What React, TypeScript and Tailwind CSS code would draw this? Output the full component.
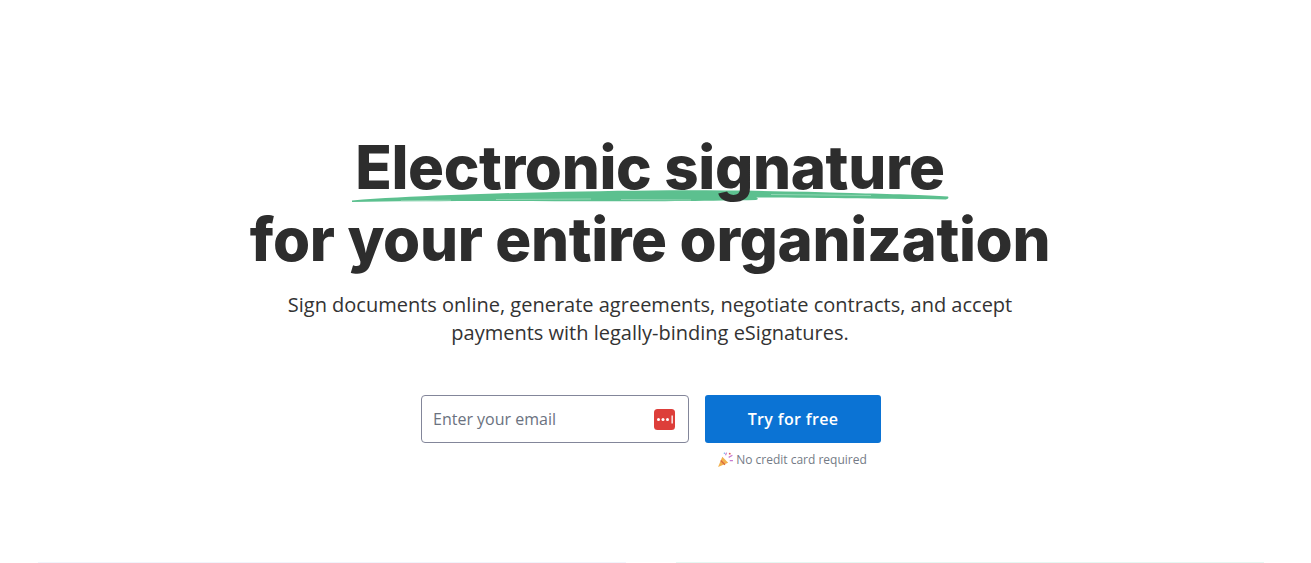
export default function App() {
  return (
    <div className="h-[563px] w-[1311px] overflow-hidden bg-white font-['Open_Sans',sans-serif]">
      <div className="flex w-[1300px] flex-col items-center pt-[131px]">
        <h1 className="relative text-center font-['Inter',sans-serif] text-[60px] font-extrabold leading-[72px] tracking-[-0.35px] text-[#2d2d2d]">
          <span className="relative inline-block">
            <svg className="absolute left-[-4px] top-[55px] h-[18px] w-[600px]" viewBox="0 0 600 18" fill="none">
              <path d="M1 14.500C30 12 60 10.500 100 9C170 6.500 240 5 300 4.500C370 4 440 5 500 7C540 8 575 9 597 10.500C598 12 597 13 595 13.500C540 13 470 12 405 11.500C408 12.500 407 13.500 405 14C340 15.500 240 15.500 150 15C90 15 40 15.300 1 16Z" fill="#5cc08f" />
              <path d="M50 14.800L100 14.200M145 13.500L240 13M270 13.500L340 14M420 8.500L520 9.500" stroke="#a9dfc4" strokeWidth="0.7" />
            </svg>
            <span className="relative">Electronic signature</span>
          </span>
          <br />
          for your entire organization
        </h1>
        <p className="mt-[16px] w-[760px] text-center text-[20px] leading-[28px] text-[#333333]">
          Sign documents online, generate agreements, negotiate contracts, and accept
          <br />
          payments with legally-binding eSignatures.
        </p>
        <div className="mt-[48px] ml-[2px] flex items-start gap-[16px]">
          <div className="flex h-[48px] w-[268px] items-center justify-between rounded-[4px] border border-[#83869a] bg-white pl-[11px] pr-[13px]">
            <span className="text-[16px] text-[#6b7280]">Enter your email</span>
            <svg width="21" height="21" viewBox="0 0 21 21">
              <rect width="21" height="21" rx="3.500" fill="#dd3e3a" />
              <circle cx="4.500" cy="10.500" r="1.500" fill="#fff" />
              <circle cx="9" cy="10.500" r="1.500" fill="#fff" />
              <circle cx="13.500" cy="10.500" r="1.500" fill="#fff" />
              <rect x="17.500" y="6.500" width="1.300" height="8" fill="#fff" />
            </svg>
          </div>
          <div className="flex flex-col items-center">
            <button className="h-[48px] w-[176px] rounded-[3px] bg-[#0b73d4] text-[16px] font-semibold tracking-[0.35px] text-white">
              Try for free
            </button>
            <div className="mt-[8px] ml-[-2px] flex items-center gap-[2px] text-[12px] leading-[16px] text-[#747b86]">
              <svg width="17" height="17" viewBox="0 0 16 16">
                <path d="M1 15L5 5.500L10.500 11Z" fill="#f2b24f" />
                <path d="M3.500 9L7.500 13" stroke="#d9683f" strokeWidth="1.300" />
                <path d="M8 4L9 1.500M11 6L14.500 4M12 9L15 9" stroke="#c77bd0" strokeWidth="1.100" />
                <circle cx="12" cy="2.500" r="0.900" fill="#e25b5b" />
                <circle cx="7" cy="2" r="0.700" fill="#5aa9e6" />
              </svg>
              No credit card required
            </div>
          </div>
        </div>
        <div className="mt-[94px] ml-[2px] flex w-[1226px] gap-[50px]">
          <div className="h-[1px] flex-1 bg-[#f1f4fb]" />
          <div className="h-[1px] flex-1 bg-[#e6f7f2]" />
        </div>
      </div>
    </div>
  );
}
